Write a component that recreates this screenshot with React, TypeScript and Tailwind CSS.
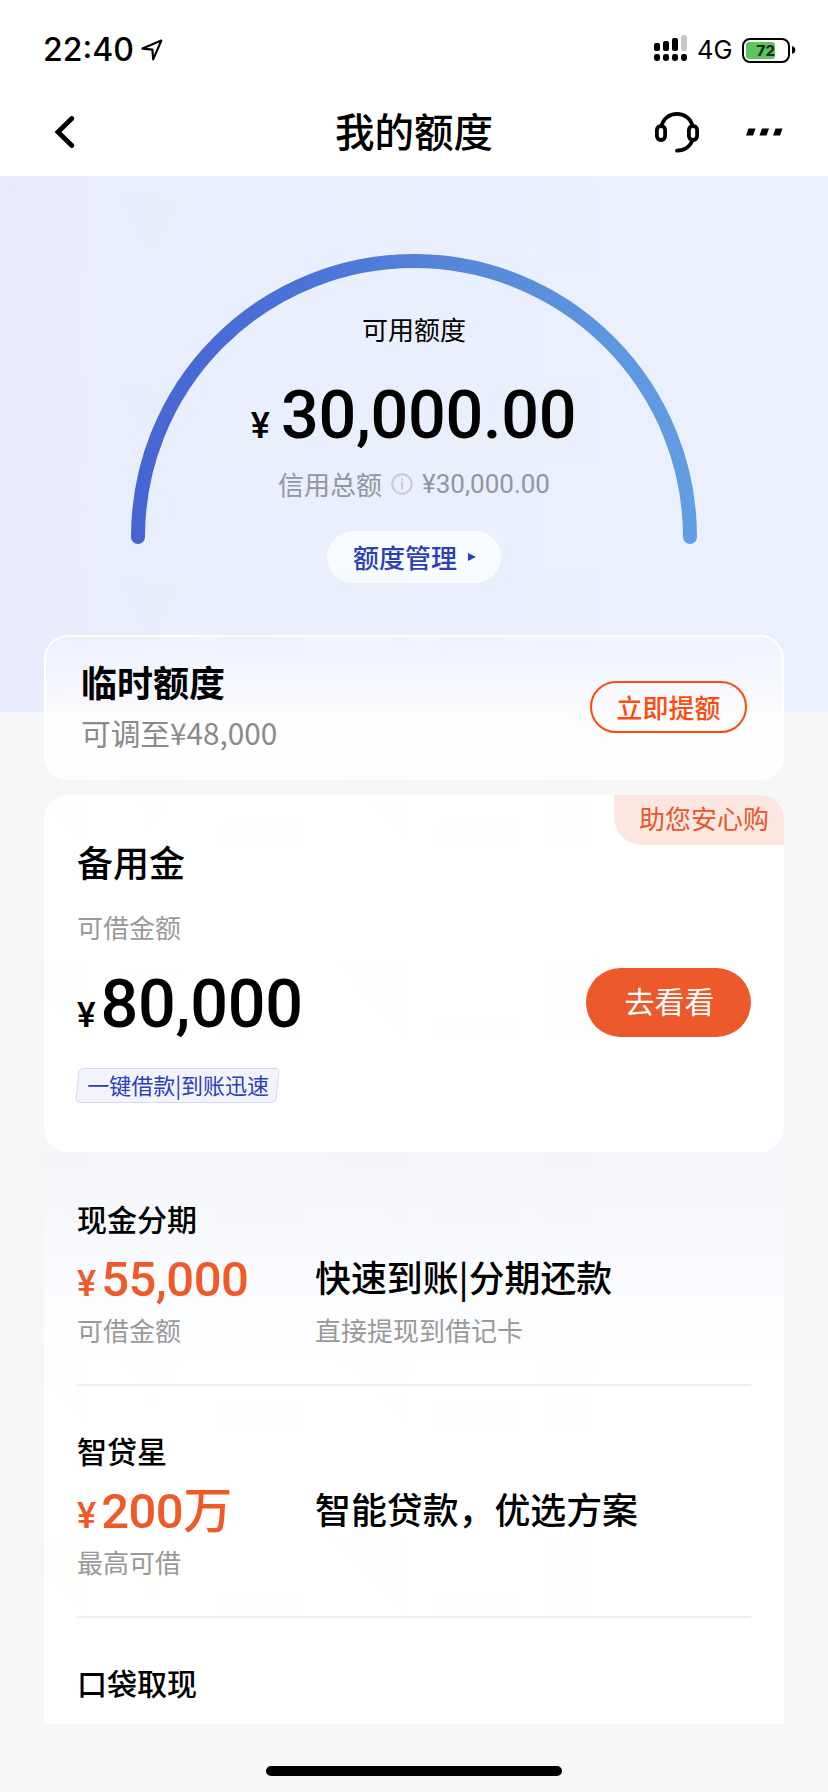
import React from "react";

type Product = {
  name: string;
  amount: string;
  note: string;
  headline?: string;
  detail?: string;
};

const products: Product[] = [
  { name: "现金分期", amount: "55,000", note: "可借金额", headline: "快速到账|分期还款", detail: "直接提现到借记卡" },
  { name: "智贷星", amount: "200万", note: "最高可借", headline: "智能贷款，优选方案" },
];

const CJK = "font-['Noto_Sans_CJK_SC',sans-serif]";
const NUM = "font-[Roboto,'Noto_Sans_CJK_SC',sans-serif]";

function StatusBar() {
  return (
    <div className="flex h-[88px] items-start justify-between pt-[30px] pl-[43px] pr-[32px] font-[Inter,sans-serif]">
      <div className="flex h-10 items-center">
        <span className="w-[98px] text-[32px] leading-10 font-medium">22:40</span>
        <svg width="22" height="22" viewBox="0 0 22 22" fill="none" stroke="#000" strokeWidth="2.2" strokeLinejoin="round">
          <path d="M1.5 9.6 20.3 1.6 12.2 20.4 11.4 10.6Z" />
        </svg>
      </div>
      <div className="flex h-10 items-center">
        <svg width="34" height="28" viewBox="0 0 34 28" className="mt-[-4px]">
          <rect x="0" y="9" width="6" height="8" rx="2" />
          <rect x="9" y="7" width="6" height="10" rx="2" />
          <rect x="18" y="4" width="6" height="13" rx="2" />
          <rect x="27" y="1" width="6" height="16" rx="2" fill="#c8c8c8" />
          <rect x="0" y="20" width="6" height="7" rx="2.4" />
          <rect x="9" y="20" width="6" height="7" rx="2.4" />
          <rect x="18" y="20" width="6" height="7" rx="2.4" />
          <rect x="27" y="20" width="6" height="7" rx="2.4" />
        </svg>
        <span className="ml-[9px] w-[45px] text-[25.5px] leading-10">4G</span>
        <div className="flex h-[25px] w-[48px] items-center rounded-[8px] border-2 border-black p-[2px]">
          <div className="flex h-[17px] w-[29px] items-center justify-end rounded-[3px] bg-[#5ec45f]">
            <span className="text-[15px] leading-none font-extrabold text-[#12301a]">72</span>
          </div>
        </div>
        <svg width="4" height="8" viewBox="0 0 4 8" className="ml-[2px]">
          <path d="M0 0C4.5 1.2 4.500 6.800 0 8Z" />
        </svg>
      </div>
    </div>
  );
}

function NavBar() {
  return (
    <div className="grid h-[88px] grid-cols-[1fr_auto_1fr] items-center px-[44px]">
      <svg className="ml-[10px]" width="22" height="34" viewBox="0 0 22 34" fill="none" stroke="#000" strokeWidth="4.8" strokeLinecap="round" strokeLinejoin="miter">
        <path d="M17.800 3.500 4 17 17.800 30.500" />
      </svg>
      <h1 className={`${CJK} -mt-[4px] text-[39.5px] leading-[84px] font-medium`}>我的额度</h1>
      <div className="flex items-center justify-end gap-[46px]">
        <svg width="46" height="42" viewBox="0 0 46 42" fill="none" stroke="#000" strokeWidth="3.8" strokeLinecap="round">
          <rect x="2.900" y="15" width="8.200" height="14" rx="4" />
          <rect x="34.900" y="15" width="8.200" height="14" rx="4" />
          <path d="M7.600 15C9 7.500 15.500 2.900 23 2.900S37 7.500 38.400 15M38.400 29C36.500 35.500 30.500 39.500 23 39.600" />
        </svg>
        <svg width="38" height="8" viewBox="0 0 38 8">
          <path d="M2.500 .5H9.500L7 7.500H0ZM16 .5H23L20.500 7.500H13.500ZM29.500 .5H36.500L34 7.500H27Z" />
        </svg>
      </div>
    </div>
  );
}

function Gauge() {
  return (
    <section className="h-[536px] bg-[linear-gradient(90deg,#e8ebfd_0%,#e9effc_25%,#eaf0fd_100%)] pt-[78px]">
      <div className="mx-auto grid w-[566px]">
        <svg className="col-start-1 row-start-1" width="566" height="292" viewBox="0 0 566 292" fill="none">
          <defs>
            <linearGradient id="arc" x1="0" x2="1">
              <stop offset="0" stopColor="#4765d2" />
              <stop offset="0.3" stopColor="#4c72d8" />
              <stop offset="0.65" stopColor="#588bda" />
              <stop offset="1" stopColor="#629de2" />
            </linearGradient>
          </defs>
          <path d="M7 283A276 276 0 0 1 559 283" stroke="url(#arc)" strokeWidth="14" strokeLinecap="round" />
        </svg>
        <div className="col-start-1 row-start-1 flex flex-col items-center">
          <div className={`${CJK} mt-[55px] text-[26px] leading-10`}>可用额度</div>
          <div className={`${NUM} mt-[26px] flex items-baseline pr-px leading-[80px] font-medium`}>
            <span className="text-[36px]">¥</span>
            <span className="ml-[11px] text-[66.5px] tracking-[-0.300px]">30,000.00</span>
          </div>
          <div className="-mt-[2px] flex h-10 items-center text-[26px] leading-10 text-[#9296a0]">
            <span className={CJK}>信用总额</span>
            <svg className="mx-[9px]" width="22" height="22" viewBox="0 0 22 22" fill="none" stroke="#cbcbcb" strokeWidth="2">
              <circle cx="11" cy="11" r="9.700" />
              <path d="M11 9V16.500M11 5.200V7.400" />
            </svg>
            <span className={NUM}>¥30,000.00</span>
          </div>
          <button className={`${CJK} mt-[27px] flex h-[52px] w-[174px] items-center justify-center rounded-full bg-[#f8fbff] pl-px text-[26px] leading-[50px] font-medium text-[#2c3fb6]`}>
            额度管理
            <svg className="ml-[11px]" width="8" height="10" viewBox="0 0 8 10">
              <path d="M0 1 8 5 0 9Z" fill="currentColor" />
            </svg>
          </button>
        </div>
      </div>
    </section>
  );
}

function TemporaryLimit() {
  return (
    <section className="flex h-[145px] items-start justify-between rounded-[24px] border-2 border-b-0 border-white bg-[linear-gradient(180deg,rgba(255,255,255,0.25)_0%,rgba(255,255,255,0.8)_55%,rgba(255,255,255,0.95)_100%)] pr-[35px] pl-[35px]">
      <div className={CJK}>
        <h2 className="mt-[18px] text-[36px] leading-[52px] font-bold">临时额度</h2>
        <p className="mt-[6px] text-[29.7px] leading-10 font-normal text-[#8a8a8a]">可调至¥48,000</p>
      </div>
      <button className={`${CJK} mt-[44px] h-[52px] w-[157px] rounded-full border-2 border-[#ff4a0d] text-[26px] leading-[46px] font-medium text-[#ff4a0d]`}>
        立即提额
      </button>
    </section>
  );
}

function ReserveFund() {
  return (
    <section className="relative mt-[15px] h-[357px] rounded-[24px] bg-white px-[33px] pt-[42px]">
      <div className={`${CJK} absolute top-0 right-0 h-[50px] w-[170px] rounded-tr-[24px] rounded-bl-[28px] bg-[#fbe7e0] pl-[25px] text-[26px] leading-[46px] text-[#ea5628]`}>
        助您安心购
      </div>
      <h2 className={`${CJK} text-[36px] leading-[48px] font-medium`}>备用金</h2>
      <p className={`${CJK} mt-[22px] text-[26px] leading-10 text-[#999]`}>可借金额</p>
      <div className="mt-[21px] flex h-[69px] items-center justify-between">
        <div className={`${NUM} mt-[15px] flex items-baseline leading-[78px] font-medium`}>
          <span className="text-[35px]">¥</span>
          <span className="ml-[5px] text-[66.5px] tracking-[-0.300px]">80,000</span>
        </div>
        <button className={`${CJK} h-[69px] w-[165px] rounded-full bg-[#ec592a] pb-[5px] pl-[2px] text-[30px] leading-[60px] text-white`}>
          去看看
        </button>
      </div>
      <div className="mt-[31px] flex h-[35px] w-[201px] -skew-x-6 items-start rounded-[5px] border border-[#d6d7ec] bg-[#f3f4fb]">
        <span className={`${CJK} skew-x-6 pl-[9px] text-[22px] leading-[30px] whitespace-nowrap text-[#2b3fba]`}>一键借款|到账迅速</span>
      </div>
    </section>
  );
}

function ProductRow({ product }: { product: Product }) {
  return (
    <article className="h-[232px] border-b-2 border-[#f0f0f0] pt-[44px]">
      <h3 className={`${CJK} text-[30px] leading-10 font-medium`}>{product.name}</h3>
      <div className="grid grid-cols-[238px_1fr]">
        <div>
          <div className={`${NUM} mt-[12px] flex items-baseline leading-[60px] font-medium text-[#f05a28]`}>
            <span className="text-[36px]">¥</span>
            <span className="ml-[5px] text-[49px] tracking-[-0.500px]">{product.amount}</span>
          </div>
          <p className={`${CJK} -mt-[4px] text-[26px] leading-10 text-[#999]`}>{product.note}</p>
        </div>
        <div className={CJK}>
          <p className="mt-[12px] text-[35.9px] leading-[52px] font-medium whitespace-nowrap">{product.headline}</p>
          <p className="mt-[8px] text-[26px] leading-10 text-[#999]">{product.detail}</p>
        </div>
      </div>
    </article>
  );
}

function Watermark() {
  return (
    <svg className="pointer-events-none absolute inset-x-0 top-[176px]" width="828" height="1548">
      <defs>
        <pattern id="tile" width="828" height="193.500" y="7" patternUnits="userSpaceOnUse">
          <g fill="#7c8a30" fillOpacity="0.013">
            <path d="M0 0H88V87ZM120 11H185L152 74ZM325 0H410V87Z" />
            <path d="M217 56H304V87H217ZM433 56H520V87H433ZM540 0H594V87H540Z" />
          </g>
        </pattern>
      </defs>
      <rect width="828" height="1548" fill="url(#tile)" />
    </svg>
  );
}

export default function App() {
  return (
    <div className="relative flex h-[1792px] w-[828px] flex-col overflow-hidden bg-[#f7f7f7] text-black">
      <header className="bg-white">
        <StatusBar />
        <NavBar />
      </header>
      <Gauge />
      <main className="mx-[44px] -mt-[77px] h-[1089px] overflow-hidden">
        <TemporaryLimit />
        <div className="mt-[15px] bg-[linear-gradient(180deg,#f7f7f7_0,#f7f7f7_300px,#f4f6fb_345px,#f6f8fc_410px,#fcfdff_520px,#fff_590px)]">
          <ReserveFund />
          <section className="h-[572px] px-[33px] pt-[2px]">
            {products.map((product) => (
              <ProductRow key={product.name} product={product} />
            ))}
            <h3 className={`${CJK} mt-[44px] text-[30px] leading-10 font-medium`}>口袋取现</h3>
          </section>
        </div>
      </main>
      <footer className="flex h-[68px] justify-center bg-[#f8f8f8] pt-[42px]">
        <div className="h-[10px] w-[296px] rounded-full bg-black" />
      </footer>
      <Watermark />
    </div>
  );
}
